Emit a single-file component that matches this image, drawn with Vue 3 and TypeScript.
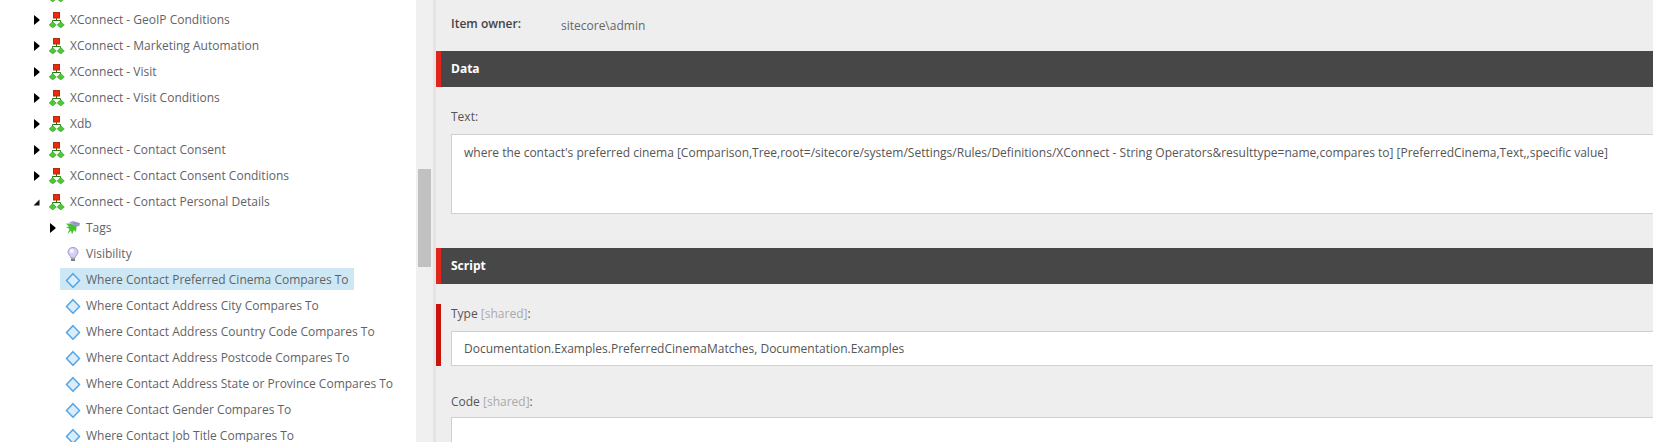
<script setup lang="ts">
interface Row { label: string; kind: 'tree' | 'tags' | 'bulb' | 'rule'; arrow?: 'closed' | 'open'; child?: boolean; selected?: boolean }
const rows: Row[] = [
  { label: '', kind: 'tree', arrow: 'closed' },
  { label: 'XConnect - GeoIP Conditions', kind: 'tree', arrow: 'closed' },
  { label: 'XConnect - Marketing Automation', kind: 'tree', arrow: 'closed' },
  { label: 'XConnect - Visit', kind: 'tree', arrow: 'closed' },
  { label: 'XConnect - Visit Conditions', kind: 'tree', arrow: 'closed' },
  { label: 'Xdb', kind: 'tree', arrow: 'closed' },
  { label: 'XConnect - Contact Consent', kind: 'tree', arrow: 'closed' },
  { label: 'XConnect - Contact Consent Conditions', kind: 'tree', arrow: 'closed' },
  { label: 'XConnect - Contact Personal Details', kind: 'tree', arrow: 'open' },
  { label: 'Tags', kind: 'tags', arrow: 'closed', child: true },
  { label: 'Visibility', kind: 'bulb', child: true },
  { label: 'Where Contact Preferred Cinema Compares To', kind: 'rule', child: true, selected: true },
  { label: 'Where Contact Address City Compares To', kind: 'rule', child: true },
  { label: 'Where Contact Address Country Code Compares To', kind: 'rule', child: true },
  { label: 'Where Contact Address Postcode Compares To', kind: 'rule', child: true },
  { label: 'Where Contact Address State or Province Compares To', kind: 'rule', child: true },
  { label: 'Where Contact Gender Compares To', kind: 'rule', child: true },
  { label: 'Where Contact Job Title Compares To', kind: 'rule', child: true },
]
</script>

<template>
  <div class="app">
    <aside class="tree">
      <div class="tree-list">
        <div v-for="(row, i) in rows" :key="i" class="row" :class="{ child: row.child }">
          <span class="arrow-slot">
            <svg v-if="row.arrow === 'closed'" width="6" height="10" viewBox="0 0 6 10"><path d="M0 0 L5.500 4.500 V5.500 L0 10 Z" fill="#000" /></svg>
            <svg v-else-if="row.arrow === 'open'" class="arrow-open" width="7" height="7" viewBox="0 0 7 7"><path d="M6.500 0.500 V6.500 H0.500 Z" fill="#111" /></svg>
          </span>
          <span class="item" :class="{ selected: row.selected }">
            <svg v-if="row.kind === 'tree'" class="icon" width="16" height="16" viewBox="0 0 16 16">
              <path d="M7.500 6 V8.500 M3.500 10.500 V8.500 H11.500 V10.500" fill="none" stroke="#1f7a14" stroke-width="1" />
              <rect x="4.500" y="0.500" width="6" height="5.500" fill="#ee2a0a" stroke="#b02a10" />
              <path d="M3.700 9.500 L7.300 13 L3.700 16 L0.200 13 Z M11.700 9.500 L15.300 13 L11.700 16 L8.200 13 Z" fill="#4cc832" stroke="#2f9a22" stroke-width="0.600" />
            </svg>
            <svg v-else-if="row.kind === 'tags'" class="icon" width="16" height="16" viewBox="0 0 16 16">
              <path d="M12 4 L1 3.500 L4 6.500 L1 7 L4.500 9 L2.500 14 L6 10.500 L7 14.500 L9 10 L11 12 L11.500 7.500 Z" fill="#45c02e" />
              <path d="M4 2.500 L8 1 L15 3 L14.500 6 L11 6.500 L7 4.500 Z" fill="#a4a4d4" />
              <path d="M8 3 L14 4 M9 5 L13 5.500" stroke="#7c88a8" stroke-width="0.700" fill="none" />
            </svg>
            <svg v-else-if="row.kind === 'bulb'" class="icon" width="16" height="16" viewBox="0 0 16 16">
              <path d="M8 1.500 C11 1.500 13 3.500 13 6 C13 8.500 10.500 9.500 10 12 H6 C5.500 9.500 3 8.500 3 6 C3 3.500 5 1.500 8 1.500 Z" fill="#d4cff4" stroke="#8f88c8" stroke-width="0.800" />
              <ellipse cx="6.800" cy="5" rx="2" ry="2.300" fill="#f6f4ff" />
              <rect x="6" y="12.500" width="4" height="2.500" fill="#7d7d88" />
            </svg>
            <svg v-else class="icon" width="16" height="16" viewBox="0 0 16 16">
              <path d="M8 1.700 L14.500 8.500 L8 15.300 L1.500 8.500 Z" fill="#d9edfc" stroke="#56a6e6" stroke-width="1.500" />
            </svg>
            <span class="label">{{ row.label }}</span>
          </span>
        </div>
      </div>
    </aside>
    <div class="scrollbar"><div class="thumb"></div></div>
    <div class="splitter"></div>
    <main class="editor">
      <div class="owner">
        <span class="owner-key">Item owner:</span>
        <span class="owner-value">sitecore\admin</span>
      </div>
      <section class="section data">
        <h2 class="section-title">Data</h2>
        <div class="field">
          <div class="field-label">Text:</div>
          <div class="box box-text">where the contact's preferred cinema [Comparison,Tree,root=/sitecore/system/Settings/Rules/Definitions/XConnect - String Operators&amp;resulttype=name,compares to] [PreferredCinema,Text,,specific value]</div>
        </div>
      </section>
      <section class="section script">
        <h2 class="section-title">Script</h2>
        <div class="field field-required">
          <div class="field-label">Type <span class="shared">[shared]</span>:</div>
          <div class="box box-input">Documentation.Examples.PreferredCinemaMatches, Documentation.Examples</div>
        </div>
        <div class="field field-code">
          <div class="field-label">Code <span class="shared">[shared]</span>:</div>
          <div class="box box-code"></div>
        </div>
      </section>
    </main>
  </div>
</template>

<style>
html, body { margin: 0; padding: 0; background: #fff; overflow: hidden; }
</style>

<style scoped>
.app {
  display: flex;
  width: 1653px;
  height: 442px;
  overflow: hidden;
  font-family: "Open Sans", sans-serif;
  font-size: 12px;
  color: #555;
}
.tree { width: 416px; flex: none; background: #fff; overflow: hidden; }
.tree-list { margin-top: -19px; }
.row { display: flex; align-items: center; height: 26px; padding-left: 30px; }
.row.child { padding-left: 46px; }
.arrow-slot { width: 14px; flex: none; display: flex; align-items: center; padding-left: 4px; box-sizing: border-box; }
.arrow-open { margin-left: -1px; }
.item { display: flex; align-items: center; align-self: flex-start; height: 22px; margin-top: 1px; padding-left: 5px; padding-right: 5px; white-space: nowrap; }
.item.selected { background: #cde8f4; }
.icon { flex: none; margin-right: 5px; margin-top: 2px; }
.label { color: #5f6368; }
.scrollbar { width: 17px; flex: none; background: #f0f0f0; padding-left: 2px; box-sizing: border-box; }
.thumb { width: 13px; height: 98px; margin-top: 169px; background: #c1c1c1; }
.splitter { width: 3px; flex: none; background: #e4e4e4; }
.editor { flex: 1; min-width: 0; background: #eee; }
.owner { display: flex; height: 51px; padding-left: 15px; padding-top: 15px; box-sizing: border-box; line-height: 17px; }
.owner-key { width: 110px; font-weight: 600; color: #444; }
.owner-value { color: #666; padding-top: 2px; }
.section-title {
  margin: 0;
  height: 36px;
  line-height: 36px;
  background: #474747;
  border-left: 5px solid #e1251b;
  padding-left: 10px;
  color: #fff;
  font-size: 12px;
  font-weight: 700;
}
.field { padding-left: 15px; }
.field-label { color: #555; line-height: 17px; }
.shared { color: #aaa; }
.box { background: #fff; border: 2px solid #d0d0d0; border-width: 1px 0 1px 1px; box-sizing: border-box; color: #555; white-space: nowrap; }
.data .field { padding-top: 21px; }
.box-text { margin-top: 9px; height: 80px; padding: 9px 12px; }
.data { height: 197px; }
.script .field-required { margin-top: 20px; padding-left: 10px; border-left: 5px solid #c9130c; height: 62px; }
.field-required .field-label { height: 27px; line-height: 17px; padding-top: 1px; box-sizing: border-box; }
.box-input { height: 35px; line-height: 33px; padding-left: 12px; }
.field-code { padding-top: 27px; }
.field-code .field-label { height: 24px; }
.box-code { height: 60px; }
</style>
